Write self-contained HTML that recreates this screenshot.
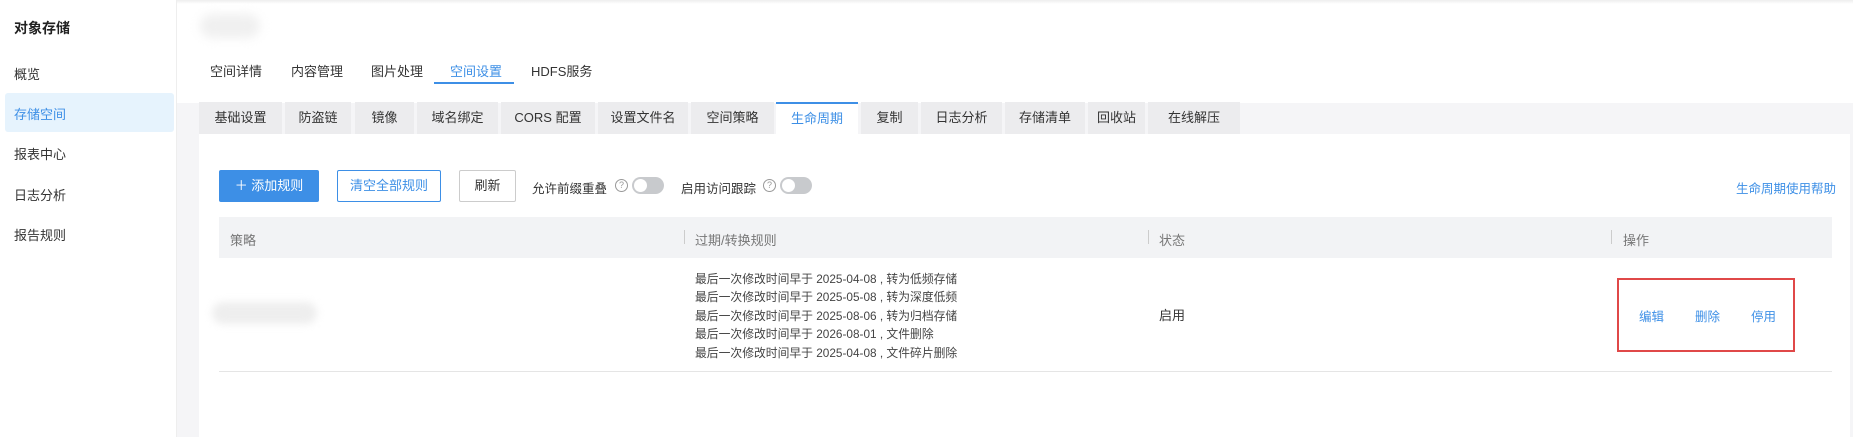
<!DOCTYPE html>
<html><head><meta charset="utf-8"><style>
*{margin:0;padding:0;box-sizing:border-box}
body{width:1853px;height:437px;overflow:hidden;background:#fff;font-family:"Liberation Sans","Noto Sans CJK SC",sans-serif;font-size:13px;color:#333;position:relative}
.a{position:absolute;white-space:nowrap}
.side{left:0;top:0;width:177px;height:437px;background:#fff;border-right:1px solid #eee}
.gray{left:177px;top:103px;width:1676px;height:334px;background:#f5f5f7}
.stab{position:absolute;top:102px;height:32px;background:#ececee;line-height:32px;text-align:center;color:#333}
.blue{color:#3d8fe6}
.q{display:inline-block;width:13px;height:13px;border:1px solid #999;border-radius:50%;font-size:9px;line-height:11px;text-align:center;color:#999}
.tg{width:32px;height:17px;border-radius:9px;background:#c8cacd}
.tg::after{content:"";position:absolute;left:2px;top:2px;width:13px;height:13px;border-radius:50%;background:#fff}
.r{left:695px;color:#444;font-size:11.8px}
</style></head><body>
<div class="a" style="left:0;top:0;width:1853px;height:4px;background:linear-gradient(#eee,#fff)"></div>
<div class="a side"></div>
<div class="a" style="left:14px;top:18px;font-weight:bold;font-size:14px;color:#222">对象存储</div>
<div class="a" style="left:14px;top:64px">概览</div>
<div class="a" style="left:5px;top:93px;width:169px;height:39px;background:#e6f3fd;border-radius:3px"></div>
<div class="a blue" style="left:14px;top:104px">存储空间</div>
<div class="a" style="left:14px;top:144px">报表中心</div>
<div class="a" style="left:14px;top:185px">日志分析</div>
<div class="a" style="left:14px;top:225px">报告规则</div>
<div class="a" style="left:200px;top:14px;width:60px;height:24px;background:#f0f0f0;border-radius:12px;filter:blur(5px)"></div>
<div class="a" style="left:210px;top:61px">空间详情</div>
<div class="a" style="left:291px;top:61px">内容管理</div>
<div class="a" style="left:371px;top:61px">图片处理</div>
<div class="a blue" style="left:450px;top:61px">空间设置</div>
<div class="a" style="left:531px;top:61px">HDFS服务</div>
<div class="a" style="left:434px;top:82px;width:80px;height:2px;background:#3d8fe6"></div>
<div class="a gray"></div>
<div class="stab" style="left:199px;width:83px">基础设置</div>
<div class="stab" style="left:285px;width:66px">防盗链</div>
<div class="stab" style="left:355px;width:59px">镜像</div>
<div class="stab" style="left:417px;width:81px">域名绑定</div>
<div class="stab" style="left:501px;width:94px">CORS 配置</div>
<div class="stab" style="left:598px;width:90px">设置文件名</div>
<div class="stab" style="left:691px;width:83px">空间策略</div>
<div class="stab blue" style="left:776px;width:82px;background:#fff;border-top:2px solid #3d8fe6;line-height:30px">生命周期</div>
<div class="stab" style="left:861px;width:57px">复制</div>
<div class="stab" style="left:921px;width:81px">日志分析</div>
<div class="stab" style="left:1005px;width:80px">存储清单</div>
<div class="stab" style="left:1088px;width:57px">回收站</div>
<div class="stab" style="left:1148px;width:92px">在线解压</div>
<div class="a" style="left:199px;top:134px;width:1651px;height:303px;background:#fff"></div>
<div class="a" style="left:219px;top:170px;width:100px;height:32px;background:#3d8fe6;border-radius:2px;color:#fff;line-height:32px;text-align:center">＋ 添加规则</div>
<div class="a blue" style="left:337px;top:170px;width:104px;height:32px;border:1px solid #3d8fe6;border-radius:2px;line-height:30px;text-align:center">清空全部规则</div>
<div class="a" style="left:459px;top:170px;width:57px;height:32px;border:1px solid #ccc;border-radius:2px;line-height:30px;text-align:center">刷新</div>
<div class="a" style="left:532px;top:178px;font-size:12.5px">允许前缀重叠</div>
<div class="a q" style="left:615px;top:179px">?</div>
<div class="a tg" style="left:632px;top:177px"></div>
<div class="a" style="left:681px;top:178px;font-size:12.5px">启用访问跟踪</div>
<div class="a q" style="left:763px;top:179px">?</div>
<div class="a tg" style="left:780px;top:177px"></div>
<div class="a blue" style="left:1736px;top:178px;font-size:12.5px">生命周期使用帮助</div>
<div class="a" style="left:219px;top:217px;width:1613px;height:41px;background:#f2f3f5"></div>
<div class="a" style="left:230px;top:230px;color:#777">策略</div>
<div class="a" style="left:684px;top:230px;width:1px;height:14px;background:#ccc"></div>
<div class="a" style="left:695px;top:230px;color:#777">过期/转换规则</div>
<div class="a" style="left:1148px;top:230px;width:1px;height:14px;background:#ccc"></div>
<div class="a" style="left:1159px;top:230px;color:#777">状态</div>
<div class="a" style="left:1611px;top:230px;width:1px;height:14px;background:#ccc"></div>
<div class="a" style="left:1623px;top:230px;color:#777">操作</div>
<div class="a" style="left:212px;top:302px;width:105px;height:22px;background:#eee;border-radius:11px;filter:blur(4px)"></div>
<div class="a r" style="top:270px">最后一次修改时间早于 2025-04-08 , 转为低频存储</div>
<div class="a r" style="top:288px">最后一次修改时间早于 2025-05-08 , 转为深度低频</div>
<div class="a r" style="top:307px">最后一次修改时间早于 2025-08-06 , 转为归档存储</div>
<div class="a r" style="top:325px">最后一次修改时间早于 2026-08-01 , 文件删除</div>
<div class="a r" style="top:344px">最后一次修改时间早于 2025-04-08 , 文件碎片删除</div>
<div class="a" style="left:1159px;top:305px">启用</div>
<div class="a" style="left:1617px;top:278px;width:178px;height:74px;border:2px solid #e04848"></div>
<div class="a blue" style="left:1639px;top:306px;font-size:12.5px">编辑</div>
<div class="a blue" style="left:1695px;top:306px;font-size:12.5px">删除</div>
<div class="a blue" style="left:1751px;top:306px;font-size:12.5px">停用</div>
<div class="a" style="left:219px;top:371px;width:1613px;height:1px;background:#e5e5e5"></div>
</body></html>
